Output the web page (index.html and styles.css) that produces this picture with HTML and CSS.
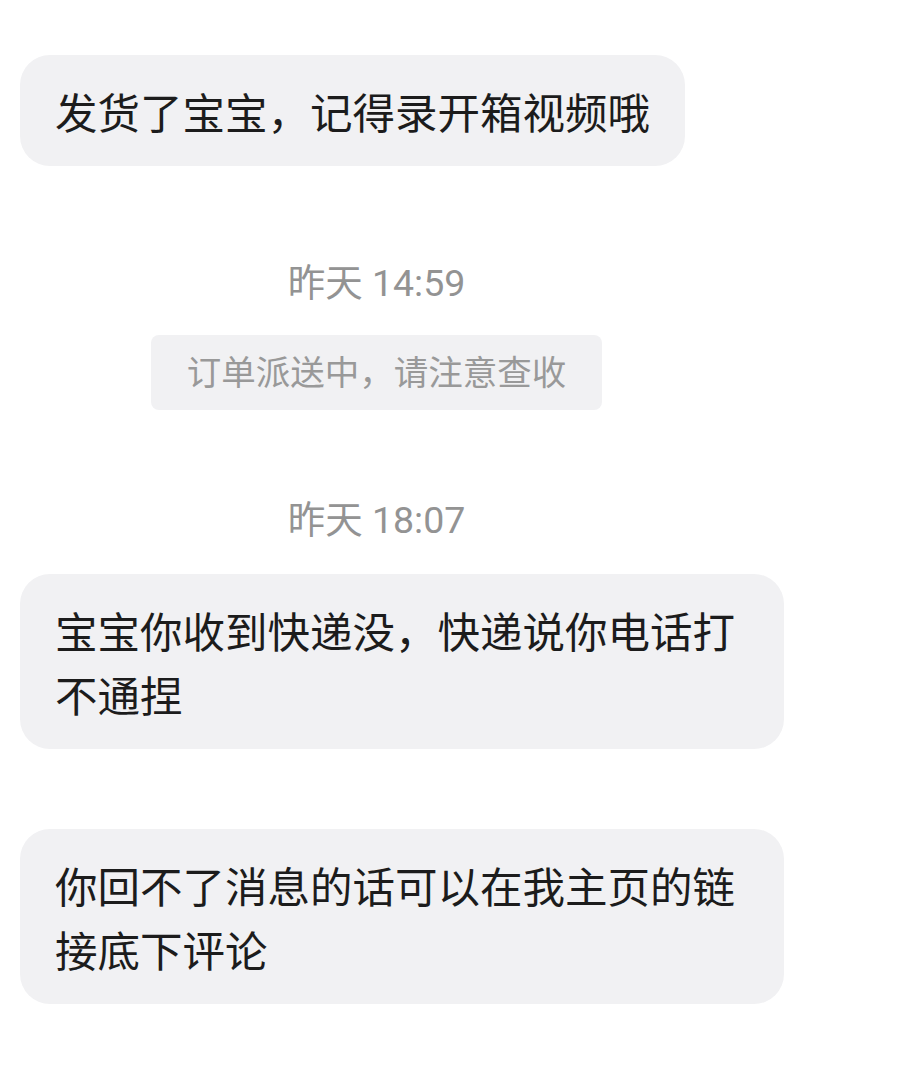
FILE: index.html
```html
<!DOCTYPE html>
<html lang="zh-CN">
<head>
    <meta charset="UTF-8">
    <meta name="viewport" content="width=device-width, initial-scale=1.0">
    <title>聊天记录</title>
    <link rel="stylesheet" href="styles.css">
</head>
<body>
    <div class="chat">
        <div class="row">
            <div class="bubble">发货了宝宝，记得录开箱视频哦</div>
        </div>

        <div class="center">
            <div class="time">昨天 14:59</div>
            <div class="notice">订单派送中，请注意查收</div>
            <div class="time time-later">昨天 18:07</div>
        </div>

        <div class="row">
            <div class="bubble">宝宝你收到快递没，快递说你电话打不通捏</div>
        </div>
        <div class="row row-gap">
            <div class="bubble">你回不了消息的话可以在我主页的链接底下评论</div>
        </div>
    </div>
</body>
</html>
```

FILE: styles.css
```css
body {
    margin: 0;
    padding: 0;
    background-color: #fff;
    font-family: Roboto, "Noto Sans CJK SC", sans-serif;
}

.chat {
    padding: 55px 0 0 20px;
}

.row {
    display: flex;
}

.row-gap {
    margin-top: 80px;
}

.bubble {
    max-width: 694px;
    padding: 28px 35px 19px;
    background-color: #f1f1f3;
    border-radius: 30px;
    color: #1c1c1c;
    font-size: 42.5px;
    line-height: 64px;
}

.center {
    width: 713px;
    display: flex;
    flex-direction: column;
    align-items: center;
    padding-top: 97px;
    padding-bottom: 34px;
}

.time {
    color: #939393;
    font-size: 37.5px;
    line-height: 40px;
}

.time-later {
    margin-top: 90px;
}

.notice {
    margin-top: 32px;
    padding: 2px 36px 0;
    height: 73px;
    line-height: 73px;
    background-color: #f1f1f3;
    border-radius: 8px;
    color: #999;
    font-size: 34.5px;
}
```
